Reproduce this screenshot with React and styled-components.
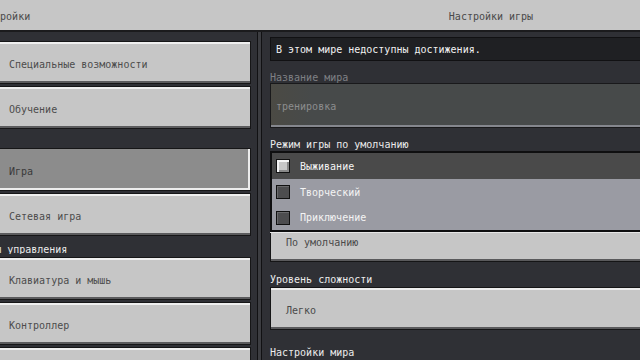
import React from "react";
import styled, { createGlobalStyle } from "styled-components";

const GlobalStyle = createGlobalStyle`
  html, body {
    margin: 0;
    padding: 0;
    background: #2f3035;
    overflow: hidden;
  }
  body {
    font-family: "DejaVu Sans Mono", "Liberation Mono", monospace;
    font-size: 10px;
  }
`;

const menuGroups = [
  { top: 0, items: ["Специальные возможности", "Обучение"] },
  { top: 19, items: ["Игра", "Сетевая игра"], selected: "Игра" },
  {
    top: 0,
    title: "Элементы управления",
    items: ["Клавиатура и мышь", "Контроллер", "Сенсорный экран"],
  },
];

const gameModes = [
  { name: "Выживание", checked: true, height: 26 },
  { name: "Творческий", height: 26 },
  { name: "Приключение", height: 25 },
];

const App = () => {
  return (
    <>
      <GlobalStyle />
      <Screen>
        <TopBar>
          <TopTitle $width={262}>
            <Clipped $shift={24}>Настройки</Clipped>
          </TopTitle>
          <TopTitle $center>Настройки игры</TopTitle>
        </TopBar>
        <Body>
          <LeftPanel>
            {menuGroups.map((group, i) => (
              <MenuGroup key={i} $top={group.top}>
                {group.title && (
                  <SectionLabel>
                    <Clipped $shift={47}>{group.title}</Clipped>
                  </SectionLabel>
                )}
                {group.items.map((item) => (
                  <MenuButton key={item} $selected={item === group.selected}>
                    {item}
                  </MenuButton>
                ))}
              </MenuGroup>
            ))}
          </LeftPanel>
          <Divider />
          <RightPanel>
            <InfoBox>В этом мире недоступны достижения.</InfoBox>
            <FieldLabel $muted $top={9} $bottom={1}>
              Название мира
            </FieldLabel>
            <TextInput>тренировка</TextInput>
            <FieldLabel $top={9} $bottom={2}>
              Режим игры по умолчанию
            </FieldLabel>
            <OptionList>
              {gameModes.map((mode) => (
                <Option key={mode.name} $active={mode.checked} $height={mode.height}>
                  <Check $checked={mode.checked} />
                  {mode.name}
                </Option>
              ))}
            </OptionList>
            <SelectButton $height={44}>По умолчанию</SelectButton>
            <FieldLabel $top={10} $bottom={3}>
              Уровень сложности
            </FieldLabel>
            <SelectButton $height={43}>Легко</SelectButton>
            <FieldLabel $top={15} $bottom={0}>
              Настройки мира
            </FieldLabel>
          </RightPanel>
        </Body>
      </Screen>
    </>
  );
};

const Screen = styled.div`
  width: 720px;
  height: 360px;
  display: flex;
  flex-direction: column;
  overflow: hidden;
  background: #2f3035;
`;

const TopBar = styled.header`
  height: 30px;
  flex: none;
  display: flex;
  background: #c6c6c6;
  border-bottom: 2px solid #1b1b1d;
  color: #4a4a4a;
`;

const TopTitle = styled.div`
  display: flex;
  align-items: center;
  padding-top: 2px;
  overflow: hidden;
  white-space: nowrap;
  width: ${(props) => (props.$width ? `${props.$width}px` : "auto")};
  flex: ${(props) => (props.$width ? "none" : 1)};
  justify-content: ${(props) => (props.$center ? "center" : "flex-start")};
`;

const Clipped = styled.span`
  margin-left: -${(props) => props.$shift}px;
  white-space: nowrap;
`;

const Body = styled.div`
  flex: 1;
  min-height: 0;
  display: flex;
`;

const LeftPanel = styled.nav`
  width: 257px;
  flex: none;
  display: flex;
  flex-direction: column;
  padding-top: 9px;
  border-right: 1px solid #111113;
  overflow: hidden;
`;

const MenuGroup = styled.div`
  display: flex;
  flex-direction: column;
  gap: 2px;
  margin-top: ${(props) => props.$top}px;
`;

const SectionLabel = styled.div`
  height: 12px;
  line-height: 16px;
  margin: 6px 0 1px;
  color: #ececec;
  overflow: hidden;
  white-space: nowrap;
`;

const MenuButton = styled.div`
  box-sizing: border-box;
  height: 43px;
  flex: none;
  width: 253px;
  margin-left: -2px;
  display: flex;
  align-items: center;
  padding: 4px 0 0 10px;
  border: 1px solid #161617;
  background: ${(props) => (props.$selected ? "#8c8c8c" : "#c6c6c6")};
  color: ${(props) => (props.$selected ? "#3a3a3a" : "#4c4c4c")};
  box-shadow: ${(props) =>
    props.$selected
      ? "inset 0 -2px 0 #ededed, inset -2px 0 0 #ededed"
      : "inset 0 2px 0 #efefef, inset 0 -2px 0 #5b5b5d"};
`;

const Divider = styled.div`
  width: 3px;
  flex: none;
  background: #3c3d41;
  border-right: 1px solid #111113;
`;

const RightPanel = styled.main`
  flex: 1;
  display: flex;
  flex-direction: column;
  padding: 5px 8px 0 8px;
  overflow: hidden;
`;

const InfoBox = styled.div`
  box-sizing: border-box;
  height: 24px;
  flex: none;
  display: flex;
  align-items: center;
  padding: 1px 0 0 5px;
  border: 1px solid #111113;
  background: #1f2023;
  color: #f2f2f2;
`;

const FieldLabel = styled.div`
  height: 12px;
  flex: none;
  line-height: 16px;
  margin-top: ${(props) => props.$top}px;
  margin-bottom: ${(props) => props.$bottom}px;
  color: ${(props) => (props.$muted ? "#7f8085" : "#ececec")};
`;

const TextInput = styled.div`
  box-sizing: border-box;
  height: 45px;
  flex: none;
  display: flex;
  align-items: center;
  padding: 2px 0 0 5px;
  border: 1px solid #19191b;
  background: linear-gradient(90deg, #4b4a44 0, #474a4a 40px, #474a4a 100%);
  box-shadow: inset 0 -2px 0 #85878e;
  color: #8c8d8e;
`;

const OptionList = styled.div`
  position: relative;
  z-index: 2;
  flex: none;
  display: flex;
  flex-direction: column;
  border: 2px solid #0f0f10;
  margin-bottom: -14px;
  box-shadow: 0 1px 0 #e6e6e6;
`;

const Option = styled.div`
  height: ${(props) => props.$height}px;
  display: flex;
  align-items: center;
  gap: 10px;
  padding-left: 4px;
  background: ${(props) => (props.$active ? "#4a4a4a" : "#9a9ba3")};
  color: #f4f4f4;
`;

const Check = styled.span`
  box-sizing: border-box;
  width: 14px;
  height: 14px;
  flex: none;
  border: 1px solid #111;
  background: ${(props) => (props.$checked ? "#c8c8c8" : "#4d4d4f")};
  box-shadow: ${(props) =>
    props.$checked
      ? "inset 2px 2px 0 #f6f6f6, inset -2px -2px 0 #8a8a8a"
      : "inset 1px 1px 0 #6a6a6c"};
`;

const SelectButton = styled.div`
  box-sizing: border-box;
  height: ${(props) => props.$height}px;
  flex: none;
  display: flex;
  align-items: center;
  padding: 4px 0 0 15px;
  border: 1px solid #151516;
  background: #c6c6c6;
  box-shadow: inset 0 2px 0 #ededed, inset 0 -2px 0 #5a5a5c;
  color: #4a4a4a;
`;

export default App;
